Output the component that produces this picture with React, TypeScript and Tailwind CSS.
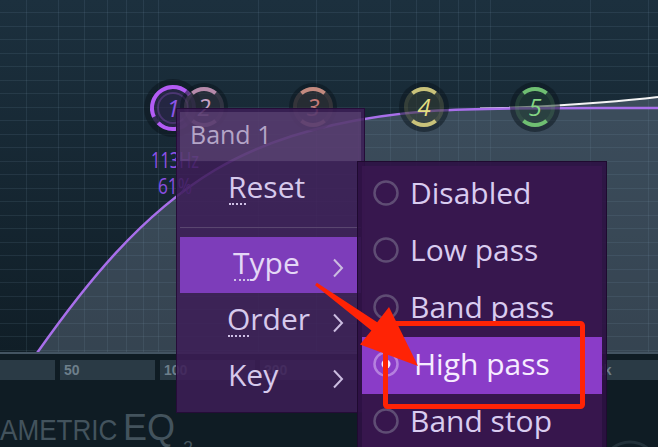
import React from "react";

const X = (f: number) => Math.round(158 + 332 * Math.log10(f / 100)) + 0.5;
const V_FREQS = [40, 50, 60, 70, 80, 90, 100, 200, 300, 400, 500, 600, 700, 800, 900, 1000, 2000, 3000];
const H_LINES = Array.from({ length: 26 }, (_, i) => Math.round(12 + i * 13.5) + 0.5);

const PURPLE = "M37 353 C85 285 140 215 215 170 C270 137 340 118 430 111 C500 107 580 108 658 108";
const WHITE = "M480 108.6 C525 107.4 570 105 600 102.5 C625 100.5 645 98.5 658 97";
const FILL =
  "M37 353 C85 285 140 215 215 170 C270 137 340 118 430 111 C450 110 465 109.2 480 108.6 C525 107.4 570 105 600 102.5 C625 100.5 645 98.5 658 97 L658 352 L37 352 Z";

function arc(cx: number, cy: number, r: number, a1: number, a2: number) {
  const p = (a: number) => [cx + r * Math.cos((a * Math.PI) / 180), cy - r * Math.sin((a * Math.PI) / 180)];
  const [x1, y1] = p(a1);
  const [x2, y2] = p(a2);
  const large = Math.abs(a2 - a1) > 180 ? 1 : 0;
  const sweep = a2 < a1 ? 1 : 0;
  return `M${x1} ${y1} A${r} ${r} 0 ${large} ${sweep} ${x2} ${y2}`;
}

type KnobProps = {
  cx: number;
  cy: number;
  r: number;
  halo: number;
  color: string;
  textColor: string;
  label: string;
  arcs: [number, number][];
  inner?: boolean;
};

function Knob({ cx, cy, r, halo, color, textColor, label, arcs, inner }: KnobProps) {
  return (
    <g>
      <circle cx={cx} cy={cy} r={halo} fill="#0a141b" fillOpacity={0.5} />
      <circle cx={cx} cy={cy} r={r - 2} fill={color} fillOpacity={0.12} />
      <circle cx={cx} cy={cy} r={r} fill="none" stroke={color} strokeOpacity={0.2} strokeWidth={4} />
      {inner && <circle cx={cx} cy={cy} r={r - 6} fill="none" stroke={color} strokeOpacity={0.25} strokeWidth={2} />}
      {arcs.map(([a, b], i) => (
        <path key={i} d={arc(cx, cy, r, a, b)} fill="none" stroke={color} strokeWidth={4} />
      ))}
      <text
        x={cx}
        y={cy + 9}
        textAnchor="middle"
        fontFamily="'Open Sans', sans-serif"
        fontStyle="italic"
        fontSize={24}
        fill={textColor}
      >
        {label}
      </text>
    </g>
  );
}

const STD: [number, number][] = [
  [130, 50],
  [-50, -130],
];

function Chevron({ className }: { className?: string }) {
  return (
    <svg width="12" height="20" viewBox="0 0 12 20" className={`shrink-0 ${className ?? ""}`}>
      <polyline points="2,1.5 10,10 2,18.5" fill="none" stroke="#cbbce0" strokeWidth="2" />
    </svg>
  );
}

function U({ ch }: { ch: string }) {
  return (
    <span className="relative">
      {ch}
      <span className="absolute bottom-[2px] left-[1px] right-[1px] border-b-2 border-dotted border-[#cfc0e6]" />
    </span>
  );
}

function Radio({ on }: { on?: boolean }) {
  return (
    <svg width="26" height="26" viewBox="0 0 26 26" className="shrink-0">
      <circle
        cx="13"
        cy="13"
        r="11.5"
        fill="none"
        stroke={on ? "#d9b8f2" : "#5f4d74"}
        strokeOpacity={on ? 0.55 : 1}
        strokeWidth="2.5"
      />
      {on && <circle cx="13" cy="13" r="4.5" fill="#f6e6ff" />}
    </svg>
  );
}

const SUB = [
  { t: "Disabled" },
  { t: "Low pass" },
  { t: "Band pass" },
  { t: "High pass", on: true },
  { t: "Band stop" },
];

export default function App() {
  return (
    <div className="relative h-[447px] w-[658px] overflow-hidden bg-[#0f1c24] font-['Open_Sans',sans-serif]">
      {/* EQ display */}
      <div className="h-[352px]">
        <svg width="658" height="352" className="block">
          <defs>
            <linearGradient id="bgg" x1="0" y1="0" x2="0" y2="1">
              <stop offset="0" stopColor="#1c303e" />
              <stop offset="1" stopColor="#101e27" />
            </linearGradient>
          </defs>
          <rect width="658" height="352" fill="url(#bgg)" />
          <path d={FILL} fill="#8293a8" fillOpacity={0.33} />
          {H_LINES.map((y) => (
            <line key={`h${y}`} x1={0} x2={658} y1={y} y2={y} stroke="#86a6ba" strokeOpacity={0.13} strokeWidth={1} />
          ))}
          {V_FREQS.map((f) => (
            <line key={`v${f}`} x1={X(f)} x2={X(f)} y1={0} y2={352} stroke="#86a6ba" strokeOpacity={0.13} strokeWidth={1} />
          ))}
          <path d={WHITE} fill="none" stroke="#f4f4f4" strokeWidth={2} />
          <path d={PURPLE} fill="none" stroke="#a86fea" strokeWidth={2.5} />

          <Knob
            cx={173}
            cy={108}
            r={21}
            halo={29}
            color="#b35cf5"
            textColor="#8d55e8"
            label="1"
            inner
            arcs={[
              [205, 38],
              [-80, -135],
            ]}
          />
          <Knob cx={204} cy={107} r={18} halo={24} color="#b68aab" textColor="#c9a2c6" label="2" arcs={STD} />
          <Knob cx={313} cy={107} r={18} halo={24} color="#c38a7f" textColor="#c47a78" label="3" arcs={STD} />
          <Knob cx={424} cy={107} r={18} halo={25} color="#c9c27a" textColor="#e2de82" label="4" arcs={STD} />
          <Knob cx={535} cy={107} r={18} halo={25} color="#6fbf72" textColor="#84d684" label="5" arcs={STD} />

          <text
            x={151}
            y={168}
            fontFamily="'Open Sans', sans-serif"
            fontSize={22}
            textLength={48}
            lengthAdjust="spacingAndGlyphs"
            fill="#9152ec"
          >
            113Hz
          </text>
          <text
            x={158}
            y={194}
            fontFamily="'Open Sans', sans-serif"
            fontSize={22}
            textLength={34}
            lengthAdjust="spacingAndGlyphs"
            fill="#8a4fe2"
          >
            61%
          </text>
        </svg>
      </div>
      <div className="h-[2px] bg-[#435462]" />

      {/* frequency labels */}
      <div className="mt-[6px] flex h-[20px] gap-[5px] font-['Liberation_Sans',sans-serif] text-[14px] font-bold leading-[20px] text-[#6d7f8b]">
        <div className="w-[55px] bg-[#2a3a45]" />
        <div className="w-[95px] bg-[#2a3a45] pl-[4px]">50</div>
        <div className="w-[95px] bg-[#2a3a45] pl-[4px]">100</div>
        <div className="w-[127px] bg-[#2a3a45] pl-[4px]">200</div>
        <div className="w-[95px] bg-[#2a3a45] pl-[4px]">500</div>
        <div className="w-[95px] bg-[#2a3a45] pl-[4px]">1k</div>
        <div className="w-[66px] bg-[#2a3a45] pl-[4px]">2k</div>
      </div>

      {/* title */}
      <div className="mt-[30px] flex items-baseline font-['Liberation_Sans',sans-serif] text-[#43535d]">
        <span className="inline-block origin-left scale-x-[0.87] text-[30px] leading-none">AMETRIC</span>
        <span className="-ml-[12px] text-[36px] leading-none">EQ</span>
        <span className="ml-[8px] translate-y-[14px] text-[18px] leading-none">2</span>
        <svg width="110" height="30" className="ml-auto shrink-0 translate-y-[18px]">
          <circle cx="22" cy="40" r="26" fill="none" stroke="#1f2d36" strokeWidth="3" />
          <circle cx="82" cy="42" r="28" fill="none" stroke="#22313a" strokeWidth="3" />
          <circle cx="82" cy="42" r="22" fill="none" stroke="#1c2a33" strokeWidth="2" />
        </svg>
      </div>

      {/* Band menu */}
      <div className="absolute left-[176px] top-[108px] h-[305px] w-[189px] border border-[#250c38] bg-[#3d1d57]/85 p-[3px]">
        <div className="h-[49px] bg-[#8a78a0]/30 pl-[10px] text-[25px] leading-[45px] text-[#b4a5c7]">Band 1</div>
        <div className="flex h-[56px] items-center pb-[4px] pl-[48px] text-[30px] leading-[52px] text-[#d6c9ec]">
          <span>
            <U ch="R" />
            eset
          </span>
        </div>
        <div className="flex h-[20px] items-center">
          <div className="h-px w-full bg-[#5a4670]" />
        </div>
        <div className="flex h-[56px] items-center justify-between bg-[#7d3dba] pb-[4px] pl-[53px] pr-[17px] text-[30px] leading-[52px] text-[#e4d8f6]">
          <span>
            <U ch="T" />
            ype
          </span>
          <Chevron className="mt-[9px]" />
        </div>
        <div className="flex h-[56px] items-center justify-between pb-[4px] pl-[47px] pr-[17px] text-[30px] leading-[52px] text-[#d6c9ec]">
          <span>
            <U ch="O" />
            rder
          </span>
          <Chevron className="mt-[8px]" />
        </div>
        <div className="flex h-[56px] items-center justify-between pb-[4px] pl-[48px] pr-[17px] text-[30px] leading-[52px] text-[#d6c9ec]">
          <span>Key</span>
          <Chevron className="mt-[8px]" />
        </div>
      </div>

      {/* Type submenu */}
      <div className="absolute left-[357px] top-[161px] h-[300px] w-[250px] border border-[#1f0a30] bg-[#2d1144]/90 p-[4px]">
        <div className="h-full bg-[#38174f]/90">
          {SUB.map((s) => (
            <div
              key={s.t}
              className={`flex h-[57px] items-center pb-[3px] pl-[11px] text-[30px] leading-[54px] ${
                s.on ? "bg-[#8a3cc8] text-[#f6ecff]" : "text-[#d9ccf0]"
              }`}
            >
              <Radio on={s.on} />
              <span className={s.on ? "ml-[15px]" : "ml-[11px]"}>{s.t}</span>
            </div>
          ))}
        </div>
      </div>

      {/* annotation */}
      <svg width="658" height="447" className="pointer-events-none absolute left-0 top-0">
        <rect x="385.5" y="323.5" width="197" height="83" rx="2" fill="none" stroke="#ff2305" strokeWidth="5" />
        <polygon
          points="316.9,282.8 377.2,322.2 389,307 418,366 360,344.5 371.4,330.4 315.1,285.2"
          fill="#ff2305"
        />
      </svg>
    </div>
  );
}
